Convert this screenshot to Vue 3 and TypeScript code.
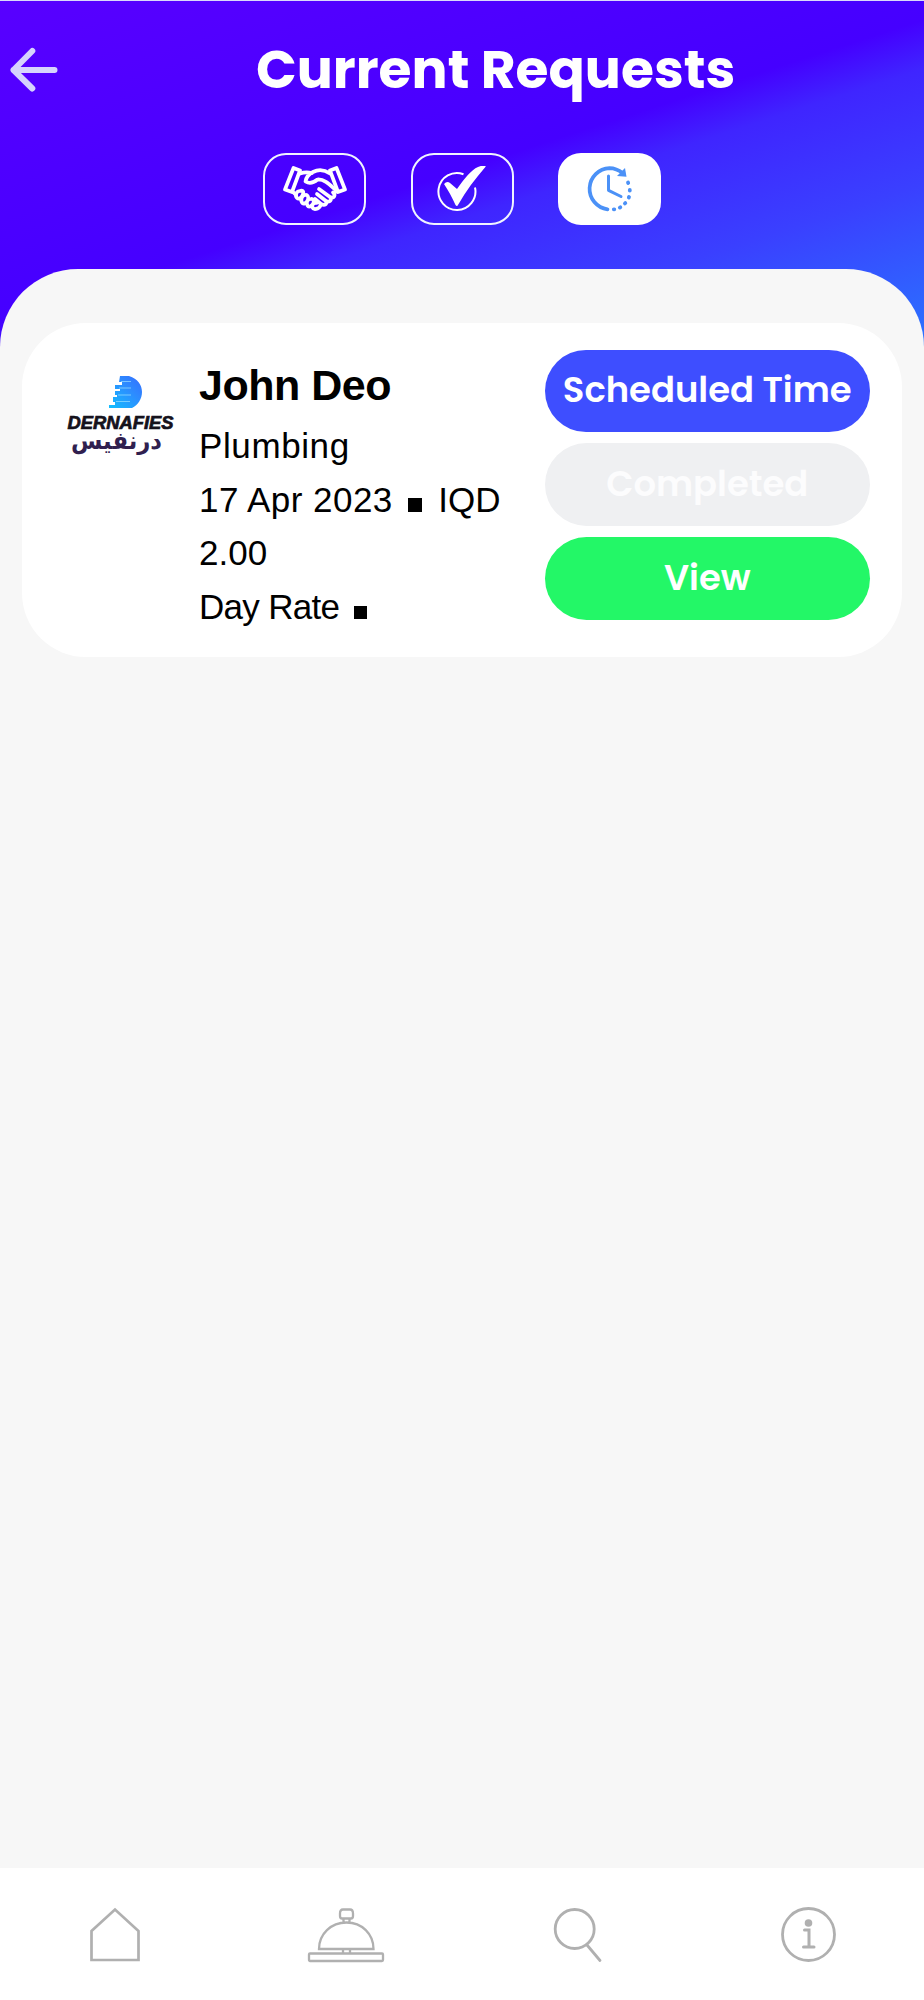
<script setup lang="ts">
import { ref } from 'vue'

type TabId = 'agreed' | 'done' | 'scheduled'

const tabs: { id: TabId; label: string }[] = [
  { id: 'agreed', label: 'Agreed' },
  { id: 'done', label: 'Done' },
  { id: 'scheduled', label: 'Scheduled' },
]
const activeTab = ref<TabId>('scheduled')

const request = {
  name: 'John Deo',
  service: 'Plumbing',
  date: '17 Apr 2023',
  currency: 'IQD',
  amount: '2.00',
  rate: 'Day Rate',
}
</script>

<template>
  <div class="screen">
    <header class="header">
      <div class="title-row">
        <button class="back" aria-label="Back">
          <svg width="48" height="46" viewBox="0 0 48 46">
            <path d="M22.300 4 3.500 23l18.800 18.500M3.500 23h41" fill="none" stroke="#d6d3fd" stroke-width="6" stroke-linecap="round" stroke-linejoin="round" />
          </svg>
        </button>
        <h1 class="title">Current Requests</h1>
      </div>
      <div class="tabs">
        <button
          v-for="tab in tabs"
          :key="tab.id"
          class="tab"
          :class="{ active: tab.id === activeTab }"
          :aria-label="tab.label"
          @click="activeTab = tab.id"
        >
          <svg v-if="tab.id === 'agreed'" width="64" height="46" viewBox="0 0 64 46" fill="none" stroke="#fff" stroke-width="3.700" stroke-linejoin="round" stroke-linecap="round">
            <path d="M10.500 2 17 4.500 9 26 2 23.500zM53.500 2 47 4.500 55 26 62 23.500z" />
            <path d="M17 7.500c4-1.500 8-1.500 12-.5M47 7.500c-6-4-12-4-17-1.500-4 2-7 6-7.500 9.500 5 3 9 .5 12-2 7-.5 12 5 18 10.500M10 26l3 3" />
            <path d="m36 23 11 8c4 2 6-2 3-4.500M34 28l9 7c4 2 6-1 4-4M32 33l6 5c4 2 6 0 5-3M52 26l3-1" />
            <path d="M17 25c-4 0-5 5-3 7s5-1 6-4-1-4-3-3zM22.500 29c-4 0-5 5-3.500 7.500s5 0 6-3-1-5-2.500-4.500zM28 33c-4 0-5 4-3.500 6.500s5 0 6-2.500-1-4.500-2.500-4zM33.500 37c-3-.5-5 2-4 4.500s6 2 8-2" />
          </svg>
          <svg v-else-if="tab.id === 'done'" width="50" height="46" viewBox="0 0 50 46">
            <path d="M26.500 8.200A18.500 18.500 0 1 0 38 21.500" fill="none" stroke="#fff" stroke-width="2" />
            <path d="M7 18q3-3.500 6-1l7 6C28 12 34 4 41 1q4-2 8-.7C38 13 29 25 21 39q-1 2-2.500 0C15 31 11 24 7 18z" fill="#fff" />
          </svg>
          <svg v-else width="46" height="46" viewBox="0 0 46 46" fill="none" stroke="#4b91f7" stroke-width="3.700" stroke-linecap="round">
            <path d="M20.500 43.300A20.700 20.700 0 0 1 22.500 2.100Q29.500 2.200 35.500 7" />
            <path d="m38 2 1.500 8.700-9.500-.7z" fill="#4b91f7" stroke="none" />
            <path d="M21.500 10v14.300L34 30.500" stroke-width="3" stroke-linejoin="round" />
            <path d="m41 16.500.2.500M42.800 24v.500M42 31l-.2.500M38.300 37.100l-.4.300M33.300 41.300l-.5.300M26.800 43.300h.5" stroke-width="3.800" />
          </svg>
        </button>
      </div>
    </header>

    <main class="panel">
      <article class="card">
        <svg class="logo" width="110" height="86" viewBox="0 0 110 86">
          <defs>
            <linearGradient id="logoBlue" x1="0" y1="1" x2="1" y2="0">
              <stop offset="0" stop-color="#12bfff" />
              <stop offset=".6" stop-color="#2d8cff" />
              <stop offset="1" stop-color="#356dff" />
            </linearGradient>
          </defs>
          <path d="M54 0h9c9 3 13 9 13 16s-4 13-10 16H43v-3h6v-3h-2v-5h4v-2h-2v-4h5v-2h-5V9h7V6h-3z" fill="url(#logoBlue)" />
          <path d="M55 5.500h10M53 12h12M52 19h13M50 25.500h14" stroke="#9be1ff" stroke-width="1.200" opacity=".7" />
          <text x="1.500" y="53" class="logo-latin" textLength="106" lengthAdjust="spacingAndGlyphs">DERNAFIES</text>
          <text x="50.500" y="73" class="logo-arabic" direction="rtl" text-anchor="middle" textLength="91" lengthAdjust="spacingAndGlyphs">درنفيس</text>
        </svg>
        <div class="info">
          <h2 class="name">{{ request.name }}</h2>
          <p class="service">{{ request.service }}</p>
          <p><span class="date">{{ request.date }}</span><i class="bullet"></i><span>{{ request.currency }}</span></p>
          <p>{{ request.amount }}</p>
          <p><span class="rate">{{ request.rate }}</span><i class="bullet"></i></p>
        </div>
        <div class="actions">
          <button class="action scheduled">Scheduled Time</button>
          <button class="action completed" disabled>Completed</button>
          <button class="action view">View</button>
        </div>
      </article>
    </main>

    <nav class="nav">
      <a class="nav-item" aria-label="Home">
        <svg width="52" height="56" viewBox="0 0 52 56"><path d="M2.500 24 26 2.500 49.500 24v29h-47z" stroke-width="2.700" /></svg>
      </a>
      <a class="nav-item" aria-label="Services">
        <svg width="78" height="56" viewBox="0 0 78 56" stroke-width="2.300">
          <rect x="2" y="46.500" width="74" height="7.500" rx="1" />
          <path d="M12 42c0-15 12-26.500 27.500-26.500S66.500 27 66.500 42zM36 42.500v4M43 42.500v4M36.500 11.500v4M42.500 11.500v4M36 2.500h7q3 0 3 4V9q0 2.500-2 2.500h-9q-2 0-2-2.500V6.500q0-4 3-4z" />
        </svg>
      </a>
      <a class="nav-item" aria-label="Search">
        <svg width="50" height="56" viewBox="0 0 50 56" stroke-width="2.800" stroke-linecap="round"><circle cx="22.700" cy="22" r="19.500" /><path d="m35 38 13 15.500" /></svg>
      </a>
      <a class="nav-item" aria-label="Information">
        <svg width="56" height="56" viewBox="0 0 56 56" stroke-width="2.800" stroke-linecap="round">
          <circle cx="28.500" cy="27.500" r="26" /><circle cx="28.500" cy="16" r="3.800" fill="#b0b0b0" stroke="none" /><path d="M24.500 23H29v17M23.500 40H34" stroke-width="3" />
        </svg>
      </a>
    </nav>
  </div>
</template>

<style>
body {
  margin: 0;
}
</style>

<style scoped>
.screen {
  display: flex;
  flex-direction: column;
  height: 2000px;
  box-sizing: border-box;
  border-top: 1px solid #dad8fb;
  overflow: hidden;
  font-family: "Liberation Sans", Arial, sans-serif;
  color: #000;
  background: linear-gradient(162deg, #5800ff 0, #4500ff 303px, #3f25ff 350px, #3a40ff 460px, #2979ff 630px) #f7f7f7;
}
button {
  border: 0;
  padding: 0;
  background: none;
  font: inherit;
}
svg {
  display: block;
}
.header {
  height: 268px;
  flex: none;
}
.title-row {
  display: flex;
  align-items: center;
  height: 138px;
}
.back {
  margin-left: 10px;
}
.title {
  margin: 0 0 1px 198px;
  color: #fff;
  font: 700 53.500px/70px Poppins, Inter, sans-serif;
  white-space: nowrap;
}
.tabs {
  display: flex;
  justify-content: center;
  gap: 44.500px;
  margin: 14px 0 0;
}
.tab {
  display: flex;
  align-items: center;
  justify-content: center;
  box-sizing: border-box;
  width: 103px;
  height: 72px;
  border: 2px solid #f0f4ff;
  border-radius: 23px;
}
.tab.active {
  background: #fff;
  border-color: #fff;
}
.panel {
  flex: 1;
  border-radius: 78px 78px 0 0;
  background: #f7f7f7;
  padding: 54px 22.500px 0 22px;
}
.card {
  display: flex;
  box-sizing: border-box;
  height: 334px;
  border-radius: 64px;
  background: #fff;
  padding: 26.500px 31.500px 0 44px;
}
.logo {
  flex: none;
  margin-top: 26.500px;
}
.logo-latin {
  font: italic 700 17.500px "Liberation Sans", sans-serif;
  fill: #15121c;
  stroke: #15121c;
  stroke-width: 0.700;
}
.logo-arabic {
  font: 700 24px "DejaVu Sans", sans-serif;
  fill: #30204f;
}
.info {
  margin-left: 23px;
  width: 345.500px;
  flex: none;
}
.name {
  margin: 9.500px 0 8px;
  font-size: 43px;
  line-height: 52px;
  letter-spacing: -0.500px;
}
.info p {
  display: flex;
  align-items: baseline;
  margin: 0;
  font-size: 35px;
  line-height: 53.700px;
  white-space: nowrap;
}
.info .service {
  letter-spacing: 0.600px;
}
.date {
  letter-spacing: 0.450px;
}
.rate {
  letter-spacing: -0.700px;
}
.bullet {
  width: 13.500px;
  height: 13.500px;
  margin: 0 16.500px 0 15.500px;
  background: #000;
}
.rate + .bullet {
  margin-left: 14.500px;
}
.actions {
  flex: 1;
  display: flex;
  flex-direction: column;
  gap: 11.300px;
}
.action {
  height: 82.600px;
  border-radius: 42px;
  color: #fff;
  font: 600 35.400px/80px Poppins, Inter, sans-serif;
  padding-bottom: 2px;
  white-space: nowrap;
}
.scheduled {
  background: #3e4eff;
}
.completed {
  background: #eff0f2;
  color: #fcfcfd;
}
.view {
  background: #23f767;
}
.nav {
  flex: none;
  display: grid;
  grid-template-columns: repeat(4, 1fr);
  height: 132px;
  background: #fff;
}
.nav-item {
  display: flex;
  justify-content: center;
  align-items: center;
  padding: 1px 1.500px 0 0;
}
.nav-item svg {
  fill: none;
  stroke: #b0b0b0;
}
</style>
